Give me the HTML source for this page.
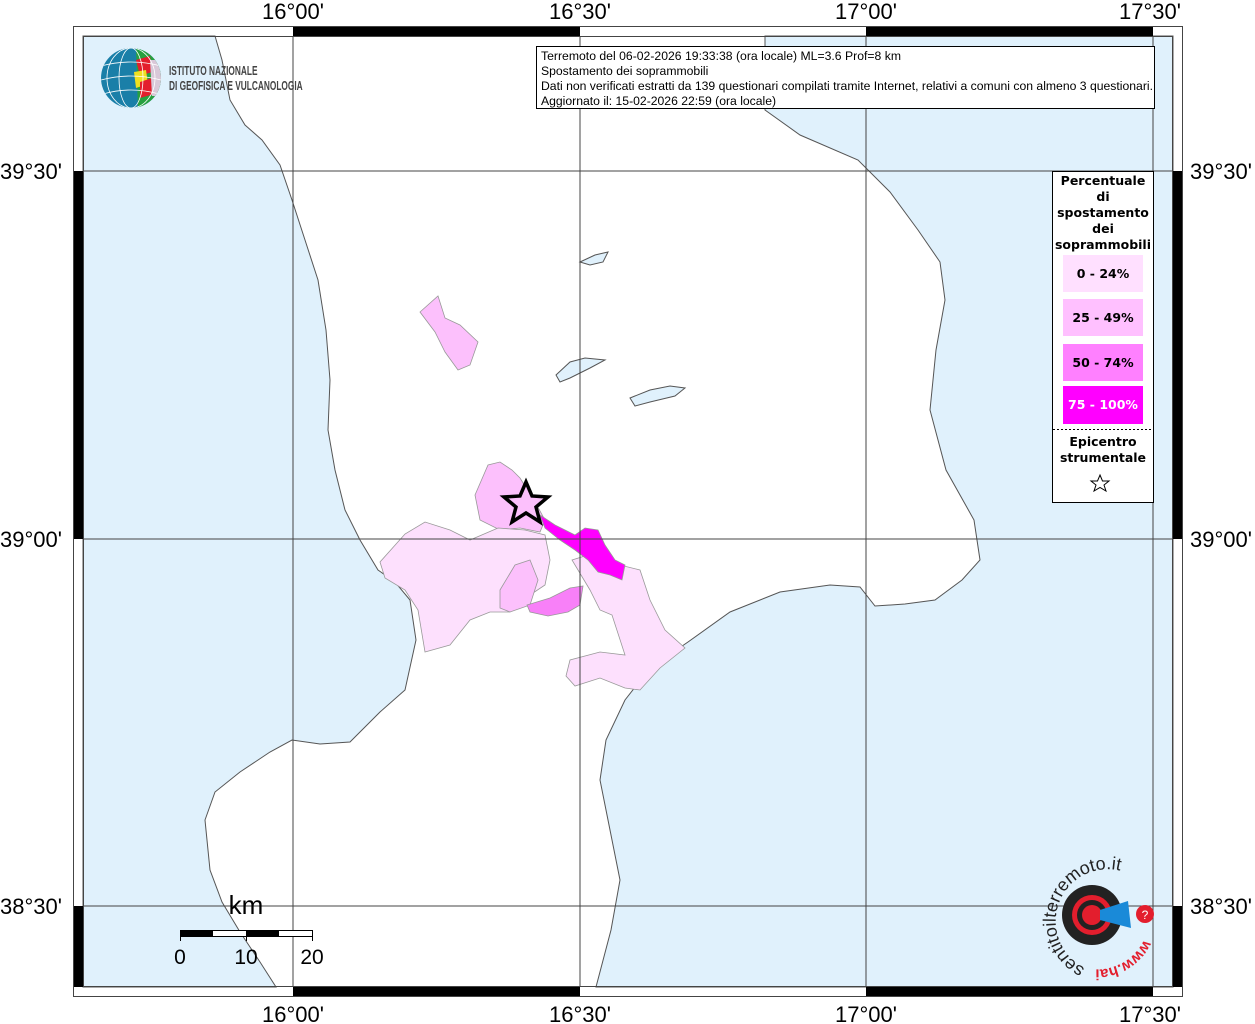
<!DOCTYPE html>
<html><head><meta charset="utf-8"><style>
body{margin:0;background:#fff;width:1255px;height:1024px;overflow:hidden;font-family:"Liberation Sans",sans-serif}
svg{position:absolute;left:0;top:0}
.lbl{font-family:"Liberation Sans",sans-serif;font-size:22px;fill:#000}
.lg{font-family:"DejaVu Sans",sans-serif;font-weight:bold;font-size:12.5px;fill:#000;text-anchor:middle}
</style></head><body>
<svg width="1255" height="1024" viewBox="0 0 1255 1024">
<rect x="83" y="36" width="1090" height="951" fill="#fff"/>
<path fill="#e0f1fc" stroke="#555" stroke-width="1" d="M83,36 L215,36 L222,60 L230,100 L245,125 L262,140 L280,165 L292,200 L305,240 L318,280 L326,330 L330,380 L328,430 L335,470 L345,510 L360,540 L378,570 L395,582 L410,600 L416,640 L405,690 L380,712 L350,742 L320,744 L292,740 L270,752 L240,772 L215,792 L205,820 L210,870 L222,902 L240,932 L260,962 L276,987 L83,987 Z"/>
<path fill="#e0f1fc" stroke="#555" stroke-width="1" d="M765,36 L765,110 L800,135 L858,160 L890,192 L918,230 L940,262 L945,300 L936,350 L930,410 L946,470 L974,520 L980,560 L962,580 L935,600 L905,604 L875,606 L860,587 L830,585 L780,592 L730,612 L688,642 L650,668 L625,700 L606,740 L600,780 L610,830 L620,880 L611,930 L596,987 L1173,987 L1173,36 Z"/>
<path fill="#e0f1fc" stroke="#555" d="M580,262 L595,255 L608,252 L603,262 L590,265 Z"/>
<path fill="#e0f1fc" stroke="#555" d="M556,375 L570,362 L585,358 L605,360 L590,368 L570,378 L560,382 Z"/>
<path fill="#e0f1fc" stroke="#555" d="M630,398 L650,390 L670,386 L685,388 L675,396 L650,402 L635,406 Z"/>
<g stroke="#999" stroke-width="0.8">
<path fill="#fcc0fc" d="M420,312 L438,296 L445,318 L460,325 L478,342 L470,365 L458,370 L445,352 L435,332 Z"/>
<path fill="#fcc0fc" d="M475,495 L488,465 L500,462 L512,470 L520,478 L535,502 L545,520 L540,532 L520,528 L500,530 L480,520 Z"/>
<path fill="#fde0fd" d="M380,562 L405,534 L425,522 L450,530 L470,540 L498,528 L525,530 L545,535 L550,560 L545,585 L530,595 L510,612 L490,612 L470,620 L450,645 L425,652 L418,610 L405,590 L385,578 Z"/>
<path fill="#fcc0fc" d="M500,590 L515,565 L530,560 L538,580 L530,605 L510,612 L500,608 Z"/>
<path fill="#f880f8" d="M527,605 L550,598 L570,588 L583,586 L580,605 L568,612 L548,616 L530,612 Z"/>
<path fill="#fde0fd" d="M572,560 L588,555 L605,570 L620,565 L640,570 L650,600 L665,630 L685,648 L660,668 L640,690 L625,688 L600,678 L575,686 L566,676 L570,660 L600,652 L625,655 L612,615 L600,610 L590,590 Z"/>
<path fill="#ff00ff" d="M540,515 L555,525 L575,535 L585,528 L598,530 L605,545 L615,560 L625,565 L622,580 L610,575 L598,572 L588,560 L575,550 L560,540 L545,528 Z"/>
</g>
<g stroke="#444" stroke-width="1">
<line x1="293" y1="36" x2="293" y2="987"/><line x1="580" y1="36" x2="580" y2="987"/><line x1="866" y1="36" x2="866" y2="987"/><line x1="1153" y1="36" x2="1153" y2="987"/>
<line x1="83" y1="171" x2="1173" y2="171"/><line x1="83" y1="539" x2="1173" y2="539"/><line x1="83" y1="906" x2="1173" y2="906"/>
</g>
<polygon points="526,482 532,496 548,497 536,507 540,522 526,513 512,522 516,507 504,497 520,496" fill="#fcc0fc" stroke="#000" stroke-width="3.5"/>
<g fill="#000">
<rect x="293" y="26" width="287" height="10"/><rect x="866" y="26" width="287" height="10"/>
<rect x="293" y="987" width="287" height="10"/><rect x="866" y="987" width="287" height="10"/>
<rect x="73" y="171" width="10" height="368"/><rect x="73" y="906" width="10" height="81"/>
<rect x="1173" y="171" width="10" height="368"/><rect x="1173" y="906" width="10" height="81"/>
</g>
<rect x="73.5" y="26.5" width="1109" height="970" fill="none" stroke="#444"/>
<rect x="83.5" y="36.5" width="1089" height="950" fill="none" stroke="#444"/>
<g class="lbl" text-anchor="middle">
<text x="293" y="19">16°00'</text><text x="580" y="19">16°30'</text><text x="866" y="19">17°00'</text><text x="1150" y="19">17°30'</text>
<text x="293" y="1022">16°00'</text><text x="580" y="1022">16°30'</text><text x="866" y="1022">17°00'</text><text x="1150" y="1022">17°30'</text>
</g>
<g class="lbl">
<text x="0" y="179">39°30'</text><text x="0" y="547">39°00'</text><text x="0" y="914">38°30'</text>
<text x="1190" y="179">39°30'</text><text x="1190" y="547">39°00'</text><text x="1190" y="914">38°30'</text>
</g>
<rect x="536.5" y="46.5" width="618" height="62" fill="#fff" stroke="#000"/>
<g font-family="Liberation Sans,sans-serif" font-size="12.2" fill="#000" transform="translate(541,0)">
<text x="0" y="60" textLength="360">Terremoto del 06-02-2026 19:33:38 (ora locale) ML=3.6 Prof=8 km</text>
<text x="0" y="75">Spostamento dei soprammobili</text>
<text x="0" y="90" textLength="612" lengthAdjust="spacingAndGlyphs">Dati non verificati estratti da 139 questionari compilati tramite Internet, relativi a comuni con almeno 3 questionari.</text>
<text x="0" y="105">Aggiornato il: 15-02-2026 22:59 (ora locale)</text>
</g>
<rect x="1052.5" y="171.5" width="101" height="331" fill="#fff" stroke="#000"/>
<text class="lg" x="1103" y="185">Percentuale</text>
<text class="lg" x="1103" y="201">di</text>
<text class="lg" x="1103" y="217">spostamento</text>
<text class="lg" x="1103" y="233">dei</text>
<text class="lg" x="1103" y="249">soprammobili</text>
<rect x="1063" y="255" width="80" height="37" fill="#ffe0ff"/>
<text class="lg" x="1103" y="278">0 - 24%</text>
<rect x="1063" y="299" width="80" height="37" fill="#ffc0ff"/>
<text class="lg" x="1103" y="322">25 - 49%</text>
<rect x="1063" y="344" width="80" height="37" fill="#ff80ff"/>
<text class="lg" x="1103" y="367">50 - 74%</text>
<rect x="1063" y="386" width="80" height="38" fill="#ff00ff"/>
<text class="lg" x="1103" y="409" style="fill:#fff">75 - 100%</text>
<line x1="1053" y1="429.5" x2="1153" y2="429.5" stroke="#000" stroke-dasharray="2,2"/>
<text class="lg" x="1103" y="446">Epicentro</text>
<text class="lg" x="1103" y="462">strumentale</text>
<polygon points="1100,475 1102.5,481 1109,481 1104,485 1106,491 1100,487.5 1094,491 1096,485 1091,481 1097.5,481" fill="#fff" stroke="#000"/>
<defs><clipPath id="gc"><circle cx="131" cy="78" r="30"/></clipPath></defs>
<g clip-path="url(#gc)">
<rect x="100" y="47" width="62" height="62" fill="#1a7fa8"/>
<path d="M136,48 L162,48 L162,110 L138,110 Z" fill="#27a040"/>
<path d="M136,60 L150,56 L152,72 L140,76 Z" fill="#e31e2d"/>
<path d="M134,72 L146,70 L148,84 L136,88 Z" fill="#f0e020"/>
<path d="M140,82 L152,78 L154,94 L140,98 Z" fill="#e31e2d"/>
<path d="M150,60 L162,60 L162,96 L152,96 Z" fill="#d9c8d8"/>
<g stroke="#fff" stroke-width="0.8" fill="none"><ellipse cx="131" cy="78" rx="12" ry="30"/><ellipse cx="131" cy="78" rx="24" ry="30"/><path d="M101,66 Q131,58 161,66 M101,80 Q131,72 161,80 M103,94 Q131,86 159,94"/></g>
</g>
<g font-family="Liberation Sans,sans-serif" font-size="13" font-weight="bold" fill="#444" transform="translate(169,0) scale(0.64,1)">
<text x="0" y="75">ISTITUTO NAZIONALE</text><text x="0" y="90">DI GEOFISICA E VULCANOLOGIA</text>
</g>
<text x="246" y="914" font-size="26" text-anchor="middle" font-family="Liberation Sans,sans-serif">km</text>
<rect x="180.5" y="930.5" width="132" height="6" fill="#fff" stroke="#000"/>
<rect x="180" y="930" width="33" height="6" fill="#000"/><rect x="246" y="930" width="33" height="6" fill="#000"/>
<g font-size="21" font-family="Liberation Sans,sans-serif" text-anchor="middle"><text x="180" y="964">0</text><text x="246" y="964">10</text><text x="312" y="964">20</text></g>
<line x1="180.5" y1="930" x2="180.5" y2="941" stroke="#000"/><line x1="246.5" y1="930" x2="246.5" y2="941" stroke="#000"/><line x1="312.5" y1="930" x2="312.5" y2="941" stroke="#000"/>
<circle cx="1092" cy="915" r="30" fill="#222"/>
<circle cx="1092" cy="915" r="20" fill="#e31e2d"/>
<circle cx="1092" cy="915" r="15" fill="#222"/>
<circle cx="1092" cy="915" r="10" fill="#e31e2d"/>
<path d="M1100,910 L1128,901 L1131,928 L1100,920 Z" fill="#1a8ad8"/>
<circle cx="1145" cy="914" r="9" fill="#e31e2d"/><text x="1145" y="919" font-size="12" fill="#fff" text-anchor="middle" font-family="Liberation Sans">?</text>
<path id="arc" d="M1085,968 A52,52 0 1,1 1145,885" fill="none"/>
<text font-family="Liberation Sans,sans-serif" font-size="18" fill="#222"><textPath href="#arc">sentitoilterremoto.it</textPath></text>
<path id="arc2" d="M1146,935 A52,52 0 0,1 1085,968" fill="none"/>
<text font-family="Liberation Sans,sans-serif" font-size="15" font-weight="bold" fill="#e31e2d"><textPath href="#arc2" startOffset="5">www.hai</textPath></text>
</svg>
</body></html>
